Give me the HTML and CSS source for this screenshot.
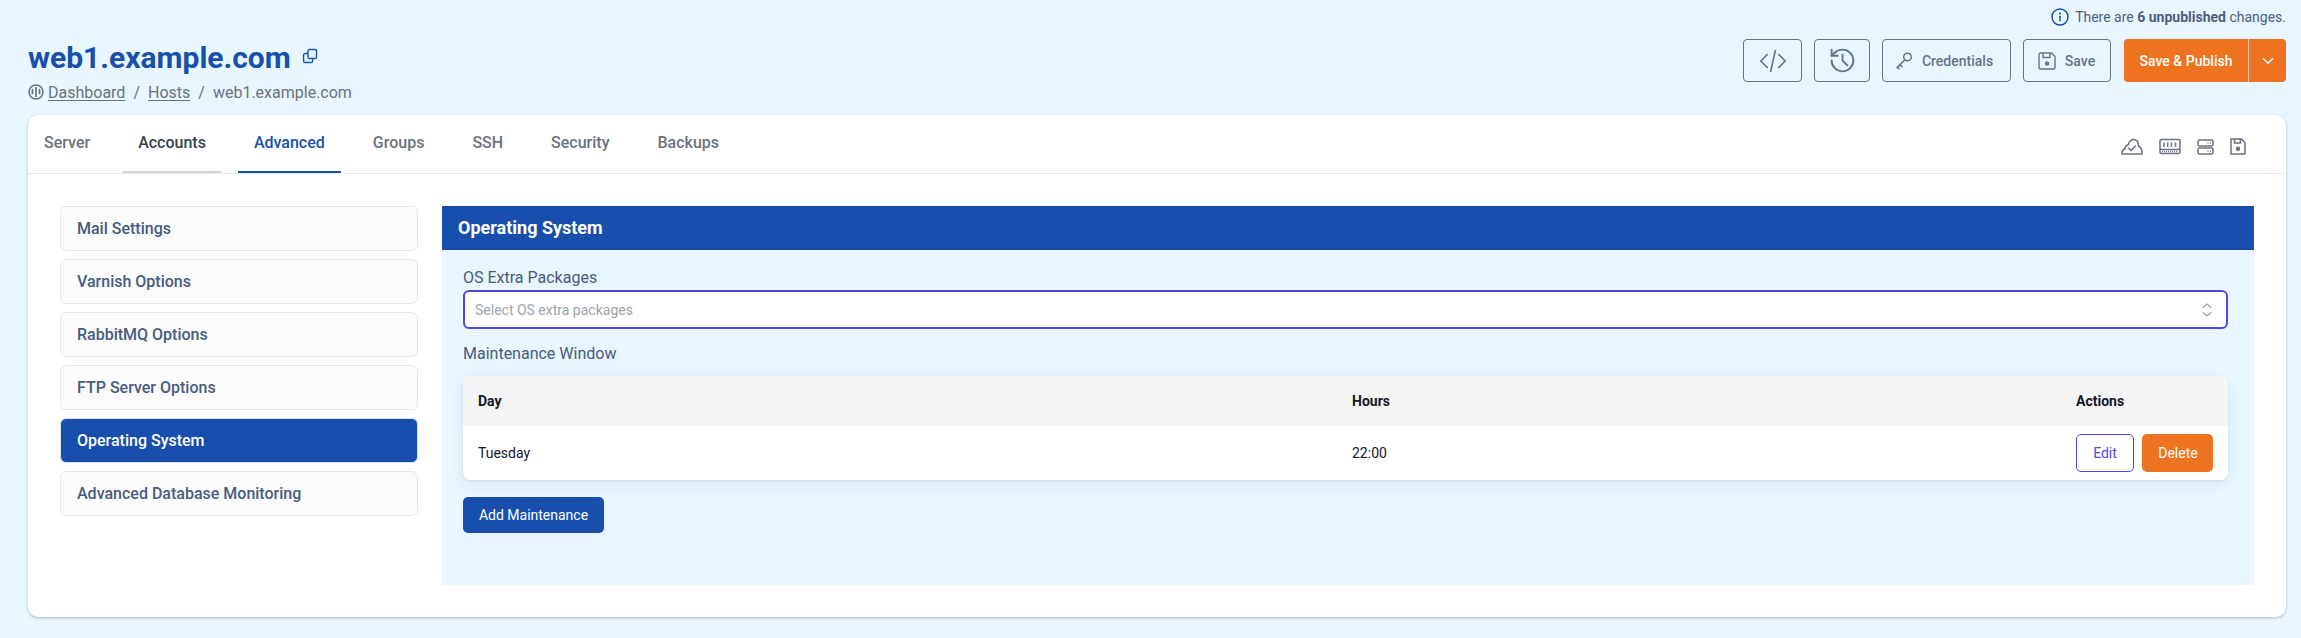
FILE: index.html

```html
<!DOCTYPE html>
<html lang="en">
<head>
	<meta charset="UTF-8">
	<meta name="viewport" content="width=device-width, initial-scale=1.0">
	<title>web1.example.com - Hosts</title>
	<link rel="stylesheet" href="styles.css">
</head>
<body>

<div class="page">
	<div class="notice">
		<svg class="notice-icon" viewBox="0 0 18 18" fill="none" stroke="currentColor" stroke-width="1.5" stroke-linecap="round">
			<circle cx="9" cy="9" r="8"/>
			<path d="M9 8.2v4.6"/>
			<path d="M9 5.2v.4" stroke-width="1.9"/>
		</svg>
		<span>There are <b>6 unpublished</b> changes.</span>
	</div>

	<div class="head">
		<div class="head-title">
			<h1>web1.example.com
				<svg class="copy-icon" viewBox="0 0 16 16" fill="none" stroke="currentColor" stroke-width="1.4" stroke-linejoin="round">
					<rect x="6" y="1.5" width="8.5" height="9" rx="1.6"/>
					<path d="M6 5.5H3.2A1.6 1.6 0 0 0 1.6 7.1v5.8a1.6 1.6 0 0 0 1.6 1.6H9a1.6 1.6 0 0 0 1.6-1.6v-2.4"/>
				</svg>
			</h1>
			<div class="crumbs">
				<svg class="crumb-icon" viewBox="0 0 16 16" fill="none" stroke="currentColor" stroke-width="1.5" stroke-linecap="round">
					<circle cx="8" cy="8" r="7"/>
					<path d="M8 3.5v9M4.5 5.5v4M11.5 5.5v4" stroke-width="1.7"/>
				</svg>
				<a href="#">Dashboard</a>
				<span class="crumb-sep">/</span>
				<a href="#">Hosts</a>
				<span class="crumb-sep">/</span>
				<span>web1.example.com</span>
			</div>
		</div>

		<div class="actions">
			<button class="btn-outline btn-code" title="Code">
				<svg viewBox="0 0 24 24" fill="none" stroke="currentColor" stroke-width="1.4" stroke-linecap="round" stroke-linejoin="round">
					<path d="M7 6.5 1.5 12 7 17.5M17 6.5l5.5 5.5-5.500 5.500M14 3l-4 18"/>
				</svg>
			</button>
			<button class="btn-outline btn-history" title="History">
				<svg viewBox="0 0 24 24" fill="none" stroke="currentColor" stroke-width="1.6" stroke-linecap="round" stroke-linejoin="round">
					<path d="M3 12a9 9 0 1 0 9-9 9.75 9.75 0 0 0-6.74 2.74L3 8"/>
					<path d="M3 3v5h5"/>
					<path d="M12 7v5l4 4"/>
				</svg>
			</button>
			<button class="btn-outline btn-text btn-cred">
				<svg viewBox="0 0 20 20" fill="none" stroke="currentColor" stroke-width="1.5" stroke-linecap="round" stroke-linejoin="round">
					<circle cx="13.5" cy="6" r="3.8"/>
					<path d="M10.8 8.8 3 16.6M6 13.6l2 2M3.500 16l1.500 1.700"/>
				</svg>
				Credentials
			</button>
			<button class="btn-outline btn-text btn-save">
				<svg viewBox="0 0 20 20" fill="none" stroke="currentColor" stroke-width="1.4" stroke-linejoin="round">
					<path d="M3.500 2h11L18 5.500v11a1.500 1.500 0 0 1-1.500 1.500h-13A1.500 1.500 0 0 1 2 16.500v-13A1.500 1.500 0 0 1 3.500 2Z"/>
					<path d="M6 2v4.500h7V2"/>
					<circle cx="10" cy="12.500" r="1.600" fill="currentColor"/>
				</svg>
				Save
			</button>
			<div class="publish">
				<button class="publish-main">Save &amp; Publish</button>
				<button class="publish-more" title="More">
					<svg viewBox="0 0 12 12" fill="none" stroke="currentColor" stroke-width="1.4" stroke-linecap="round" stroke-linejoin="round">
						<path d="M1.500 3.800 6 8.300l4.500-4.500"/>
					</svg>
				</button>
			</div>
		</div>
	</div>

	<div class="card">
		<div class="tabs">
			<div class="tab-list">
				<a class="tab" href="#">Server</a>
				<a class="tab tab-hover" href="#">Accounts</a>
				<a class="tab tab-active" href="#">Advanced</a>
				<a class="tab" href="#">Groups</a>
				<a class="tab" href="#">SSH</a>
				<a class="tab" href="#">Security</a>
				<a class="tab" href="#">Backups</a>
			</div>
			<div class="status-icons">
				<svg class="icon-cloud" viewBox="0 0 22 17" fill="none" stroke="currentColor" stroke-width="1.6" stroke-linecap="round" stroke-linejoin="round">
					<path d="M1 16c-.2-2.500.8-4.600 3-5.300.2-2 1.300-3.700 3.200-4C8.200 3.300 10 1.500 12.500 1.500c2.400 0 4.200 1.600 4.800 4 .2.900.2 1.800.2 2.800 2.300 1 3.800 3.900 3.500 7.700Z"/>
					<path d="m7.500 10 2.500 2.500 4.500-4.500"/>
				</svg>
				<svg class="icon-ram" viewBox="0 0 22 17" fill="none" stroke="currentColor" stroke-width="1.5">
					<rect x="1" y="1.500" width="20" height="14" rx="1.200"/>
					<path d="M1 11.500h20M5 4.500V9M8.700 4.500V9M12.400 4.500V9M16.500 4.500V9"/>
					<path d="M3 13.500h16" stroke-dasharray="1 1"/>
				</svg>
				<svg class="icon-server" viewBox="0 0 17 16" fill="none" stroke="currentColor" stroke-width="1.5">
					<rect x="1" y="1" width="15" height="6" rx="1.400"/>
					<rect x="1" y="9" width="15" height="6" rx="1.400"/>
					<path d="M10.500 4h1M13 4h1M10.500 12h1M13 12h1"/>
				</svg>
				<svg class="icon-disk" viewBox="0 0 16 17" fill="none" stroke="currentColor" stroke-width="1.5">
					<path d="M1 1h10.500L15 4.500V16H1Z"/>
					<path d="M4.500 1v4h6V1"/>
					<circle cx="8" cy="10.800" r="1.500" fill="currentColor"/>
				</svg>
			</div>
		</div>

		<div class="card-body">
			<div class="side-menu">
				<a class="side-item" href="#">Mail Settings</a>
				<a class="side-item" href="#">Varnish Options</a>
				<a class="side-item" href="#">RabbitMQ Options</a>
				<a class="side-item" href="#">FTP Server Options</a>
				<a class="side-item side-active" href="#">Operating System</a>
				<a class="side-item" href="#">Advanced Database Monitoring</a>
			</div>

			<div class="panel">
				<div class="panel-title">Operating System</div>
				<div class="panel-body">
					<label class="field-label">OS Extra Packages</label>
					<div class="select-box">
						<span>Select OS extra packages</span>
						<svg viewBox="0 0 10 14" fill="none" stroke="currentColor" stroke-width="1.1" stroke-linecap="round" stroke-linejoin="round">
							<path d="M1 4.500 5 1l4 3.500M1 9.500 5 13l4-3.500"/>
						</svg>
					</div>

					<label class="field-label field-label-second">Maintenance Window</label>
					<div class="table-wrap">
						<table>
							<thead>
								<tr>
									<th class="col-day">Day</th>
									<th class="col-hours">Hours</th>
									<th>Actions</th>
								</tr>
							</thead>
							<tbody>
								<tr>
									<td>Tuesday</td>
									<td>22:00</td>
									<td class="row-actions">
										<button class="btn-edit">Edit</button>
										<button class="btn-delete">Delete</button>
									</td>
								</tr>
							</tbody>
						</table>
					</div>

					<button class="btn-add">Add Maintenance</button>
				</div>
			</div>
		</div>
	</div>
</div>

</body>
</html>
```

FILE: styles.css

```css
* {
	box-sizing: border-box;
}
html, body {
	margin: 0;
	background-color: #e8f6ff;
}
body {
	font-family: Roboto, "Liberation Sans", Arial, sans-serif;
	font-size: 14px;
	color: #475b82;
}
button {
	font-family: inherit;
	cursor: pointer;
}
a {
	color: inherit;
	text-decoration: none;
}
.page {
	padding: 8px 15px 21px 28px;
}

/* top notice */
.notice {
	display: flex;
	justify-content: flex-end;
	align-items: center;
	gap: 6px;
	height: 18px;
	font-size: 14px;
	color: #4b5f80;
}
.notice b {
	font-weight: 700;
}
.notice-icon {
	width: 18px;
	height: 18px;
	color: #184fad;
}

/* header */
.head {
	display: flex;
	justify-content: space-between;
	height: 89px;
}
.head-title {
	padding-top: 14px;
}
h1 {
	display: flex;
	align-items: center;
	gap: 11px;
	margin: 0;
	font-size: 30px;
	line-height: 36px;
	font-weight: 700;
	color: #184fad;
}
.copy-icon {
	width: 16px;
	height: 16px;
	margin-top: -4px;
}
.crumbs {
	display: flex;
	align-items: center;
	height: 24px;
	margin-top: 4px;
	font-size: 16px;
	color: #6b7280;
}
.crumbs a {
	text-decoration: underline;
	text-underline-offset: 2px;
}
.crumb-icon {
	width: 16px;
	height: 16px;
	margin-right: 4px;
}
.crumb-sep {
	margin: 0 8px;
}
.actions {
	display: flex;
	gap: 12px;
	height: 43px;
	margin-top: 13px;
}
.btn-outline {
	display: flex;
	align-items: center;
	justify-content: center;
	height: 43px;
	padding: 0;
	background: transparent;
	border: 1px solid #64748b;
	border-radius: 4px;
	color: #64748b;
	font-size: 14px;
	font-weight: 500;
}
.btn-code {
	width: 59px;
}
.btn-code svg {
	width: 28px;
	height: 28px;
}
.btn-history {
	width: 56px;
}
.btn-history svg {
	width: 29px;
	height: 29px;
}
.btn-text {
	gap: 8px;
}
.btn-text svg {
	width: 20px;
	height: 20px;
}
.btn-cred {
	width: 129px;
	padding-right: 6px;
}
.btn-save {
	width: 88px;
	padding-right: 2px;
}
.publish {
	display: flex;
	margin-left: 1px;
	width: 162px;
	height: 43px;
	border-radius: 4px;
	overflow: hidden;
	background-color: #ee7320;
}
.publish button {
	height: 43px;
	padding: 0;
	border: none;
	background: transparent;
	color: #fff;
	font-size: 14px;
	font-weight: 500;
}
.publish .publish-main {
	width: 125px;
	border-right: 1px solid #f7c6a2;
}
.publish-more {
	display: flex;
	align-items: center;
	justify-content: center;
	flex: 1;
}
.publish-more svg {
	width: 12px;
	height: 12px;
}

/* main card */
.card {
	height: 502px;
	background-color: #fff;
	border-radius: 10px;
	box-shadow: 0 1px 3px rgba(30, 50, 80, 0.3);
}
.tabs {
	display: flex;
	justify-content: space-between;
	align-items: flex-start;
	height: 59px;
	border-bottom: 1px solid #e5e7eb;
}
.tab-list {
	display: flex;
	gap: 16px;
}
.tab {
	display: block;
	height: 58px;
	padding: 0 16px;
	line-height: 56px;
	font-size: 16px;
	font-weight: 500;
	color: #6b7280;
	border-bottom: 2px solid transparent;
}
.tab-hover {
	color: #374151;
	border-bottom-color: #d1d5db;
}
.tab-active {
	color: #184fad;
	border-bottom-color: #184fad;
}
.status-icons {
	display: flex;
	align-items: center;
	gap: 16px;
	padding: 23px 40px 0 0;
	color: #6b7280;
}
.icon-cloud, .icon-ram {
	width: 22px;
	height: 17px;
}
.icon-server {
	width: 17px;
	height: 16px;
}
.icon-disk {
	width: 16px;
	height: 17px;
}
.card-body {
	display: flex;
	gap: 24px;
	padding: 32px;
}

/* side menu */
.side-menu {
	display: flex;
	flex-direction: column;
	gap: 8px;
	width: 358px;
	flex-shrink: 0;
}
.side-item {
	display: flex;
	align-items: center;
	height: 45px;
	padding-left: 16px;
	background-color: #fbfbfb;
	border: 1px solid #e5e7eb;
	border-radius: 6px;
	font-size: 16px;
	font-weight: 500;
	color: #475b82;
}
.side-active {
	background-color: #184fad;
	border-color: #dbe2ea;
	color: #fff;
}

/* operating system panel */
.panel {
	flex: 1;
	height: 379px;
	background-color: #e8f6ff;
}
.panel-title {
	height: 44px;
	padding-left: 16px;
	line-height: 44px;
	background-color: #184fad;
	color: #fff;
	font-size: 18px;
	font-weight: 700;
}
.panel-body {
	padding: 16px 26px 0 21px;
}
.field-label {
	display: block;
	font-size: 16px;
	line-height: 24px;
	color: #475b82;
}
.field-label-second {
	margin-top: 13px;
}
.select-box {
	display: flex;
	align-items: center;
	justify-content: space-between;
	height: 39px;
	padding: 0 14px 0 10px;
	background-color: #fff;
	border: 2px solid #4f46e5;
	border-radius: 6px;
	font-size: 14px;
	color: #9ca3af;
}
.select-box svg {
	width: 10px;
	height: 14px;
	color: #94a3b8;
}
.table-wrap {
	margin-top: 10px;
	border-radius: 8px;
	overflow: hidden;
	box-shadow: 0 1px 2px rgba(0, 0, 0, 0.08), 0 4px 14px rgba(30, 60, 110, 0.08);
}
table {
	width: 100%;
	table-layout: fixed;
	border-collapse: collapse;
	font-size: 14px;
	color: #111827;
}
th, td {
	padding: 0 15px;
	text-align: left;
}
th {
	height: 50px;
	background-color: #f5f5f5;
	font-weight: 700;
}
td {
	height: 54px;
	background-color: #fff;
}
.col-day {
	width: 874px;
}
.col-hours {
	width: 724px;
}
.row-actions {
	padding-right: 0;
	white-space: nowrap;
}
.row-actions button {
	height: 38px;
	padding: 0;
	border-radius: 5px;
	font-size: 14px;
	vertical-align: middle;
}
.btn-edit {
	width: 58px;
	margin-right: 5px;
	background-color: #fff;
	border: 1px solid #4f46e5;
	color: #4f46e5;
}
.btn-delete {
	width: 71px;
	background-color: #ee7320;
	border: none;
	color: #fff;
}
.btn-add {
	display: block;
	width: 141px;
	height: 36px;
	margin-top: 17px;
	padding: 0;
	background-color: #184fad;
	border: none;
	border-radius: 5px;
	color: #fff;
	font-size: 14px;
}
```
